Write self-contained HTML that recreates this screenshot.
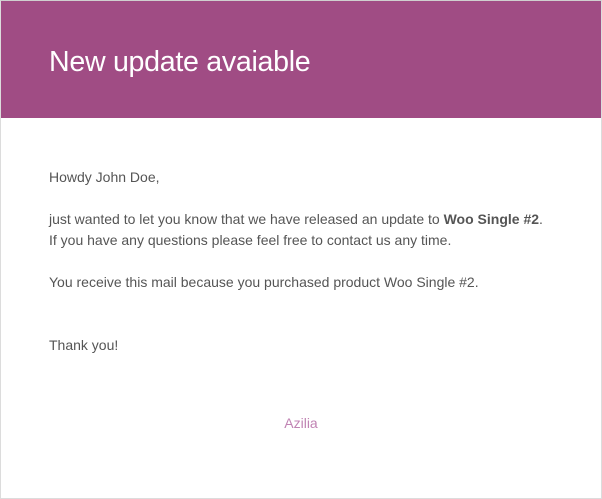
<!DOCTYPE html>
<html><head><meta charset="utf-8"><style>
html,body{margin:0;padding:0;width:602px;height:499px;background:#fff;overflow:hidden}
.box{position:absolute;left:0;top:0;width:600px;height:497px;border:1px solid #dcdcdc;border-top-color:#cfcfcf;background:#fff}
.hd{position:absolute;left:0;top:0;width:600px;height:117px;background:#a04c84}
.t{position:absolute;left:48px;top:41px;font:300 28.6px/40px "Liberation Sans",sans-serif;color:#fff;letter-spacing:-0.3px;white-space:nowrap}
.l{position:absolute;left:48px;font:14px/20px "Liberation Sans",sans-serif;color:#555;white-space:nowrap}
.a{position:absolute;left:0;width:600px;text-align:center;font:14px/20px "Liberation Sans",sans-serif;color:#c083b3}
</style></head><body>
<div class="box">
<div class="hd"><div class="t">New update avaiable</div></div>
<div class="l" style="top:166px">Howdy John Doe,</div>
<div class="l" style="top:208px">just wanted to let you know that we have released an update to <b>Woo Single #2</b>.</div>
<div class="l" style="top:229px">If you have any questions please feel free to contact us any time.</div>
<div class="l" style="top:271px">You receive this mail because you purchased product Woo Single #2.</div>
<div class="l" style="top:334px">Thank you!</div>
<div class="a" style="top:412px">Azilia</div>
</div>
</body></html>
